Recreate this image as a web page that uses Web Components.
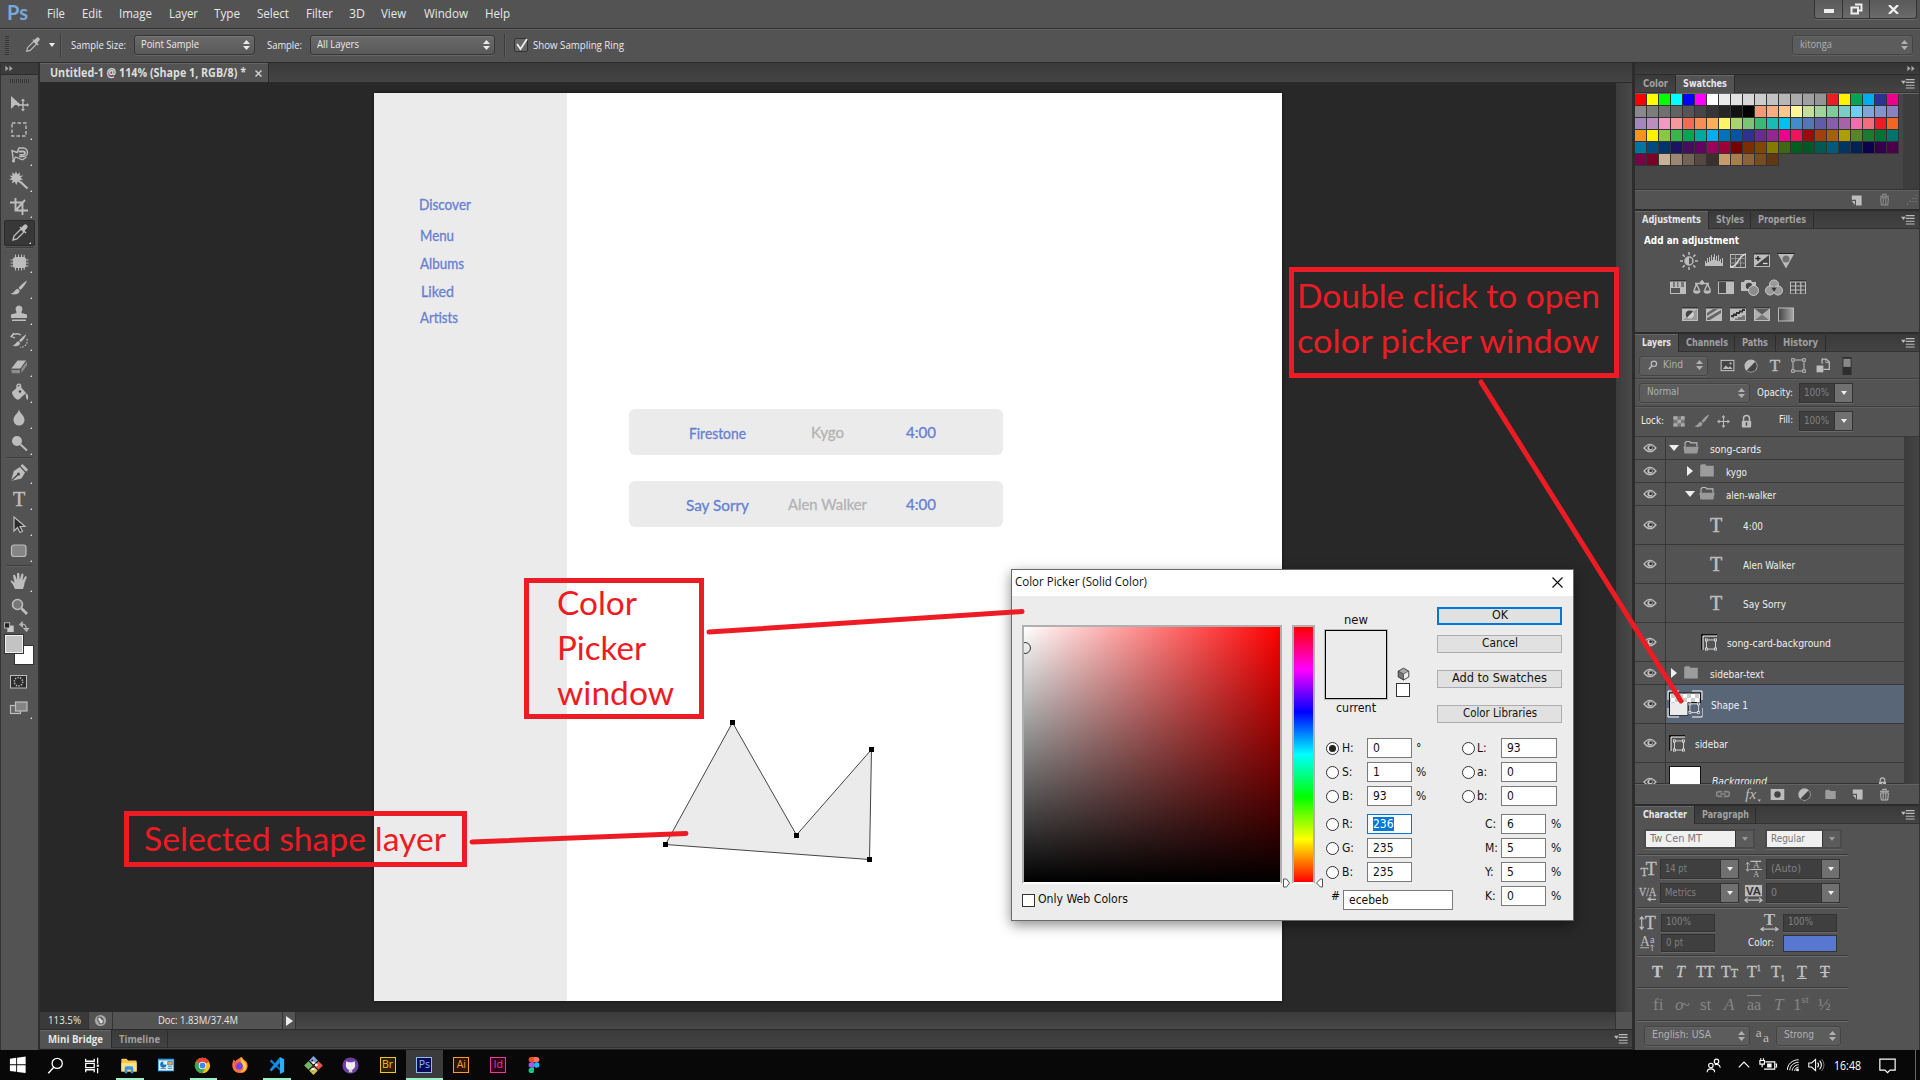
<!DOCTYPE html>
<html lang="en"><head><meta charset="utf-8"><title>Untitled-1 @ 114% (Shape 1, RGB/8) *</title>
<style>
html,body{margin:0;width:1920px;height:1080px;overflow:hidden;background:#282828}
body{font:11px "DejaVu Sans Condensed","DejaVu Sans",sans-serif;color:#e8e8e8}
</style></head><body>
<ps-app></ps-app>
<script>
const BASE='*{box-sizing:border-box}:host{display:block}.r{display:flex;align-items:center}.c{flex:none;display:flex;align-items:center}';
function def(name,css,html,after){
  customElements.define(name,class extends HTMLElement{
    connectedCallback(){
      if(this.shadowRoot)return;
      const s=this.attachShadow({mode:'open'});
      s.innerHTML='<style>'+BASE+css+'</style>'+(typeof html==='function'?html(this):html);
      if(after)after(this,s);
    }
  });
}
const A=(e,n,d='')=>e.getAttribute(n)??d;
/* A flex row: items are [x, width, markup], spaced from the starting x. */
function row(x0,h,items,extra=''){
  let x=x0,o=`<div class="r" style="height:${h}px;${extra}">`;
  for(const [px,w,m] of items){o+=`<div class="c" style="margin-left:${px-x}px;width:${w}px;height:100%">${m}</div>`;x=px+w}
  return o+'</div>';
}
const tx=(t,w,st='')=>`<t-x w="${w}" style="${st}">${t}</t-x>`;
const ic=(n,w=20,h=w,st='')=>`<ps-icon n="${n}" w="${w}" h="${h}" style="${st}"></ps-icon>`;
/* Text that is set to an exact advance width. */
def('t-x',':host{display:block;flex:none;white-space:nowrap;line-height:1.3}span{display:inline-block;transform-origin:0 50%}','<span><slot></slot></span>',(e,s)=>{
  const w=+A(e,'w',0),sp=s.querySelector('span');
  if(w){const n=sp.getBoundingClientRect().width;if(n){sp.style.transform=`scaleX(${w/n})`;e.style.width=w+'px'}}
});

const S='fill="none" stroke="currentColor"';
const letT=(x,y,s,t='T',o='')=>`<text x="${x}" y="${y}" font-family="Liberation Serif" font-size="${s}" text-anchor="middle" fill="currentColor" ${o}>${t}</text>`;
const sq=(b)=>`<rect x="2" y="3" width="16" height="13" fill="#bdbdbd"/><rect x="2" y="2.400" width="16" height="1" fill="#222"/>`+b;
const eyed=`<path d="M4 17l1-4 7-7 3 3-7 7z" ${S} stroke-width="1.3"/><path d="M10.5 4.500l6 6 1-1-1.800-1.800 2.200-2.400a2 2 0 0 0-3-3.200l-2.600 2.400-1-1z" fill="currentColor"/>`;
const brush=`<path d="M18 2.500c-3 1.500-6 4.500-8.500 7.500l2 2c3-3 5.500-6.200 6.500-9.500zM8.800 10.800c-3 .2-2.800 4.200-7.300 5 3.500 1.700 8.800.8 9.200-3z" fill="currentColor"/>`;
const bbox=`<path d="M5 3.500h10M5 16.500h10M3.500 5v10M16.500 5v10" ${S} stroke-width="1.2"/><g fill="#535353" stroke="currentColor" stroke-width="1.1"><rect x="2" y="2" width="3" height="3"/><rect x="15" y="2" width="3" height="3"/><rect x="2" y="15" width="3" height="3"/><rect x="15" y="15" width="3" height="3"/></g>`;
const half=`<circle cx="10" cy="10" r="6.500" ${S} stroke-width="1.500"/><path d="M14.600 5.400a6.500 6.500 0 0 1-9.200 9.200z" fill="#444"/><path d="M14.600 5.400a6.500 6.500 0 0 0-9.200 9.200z" fill="currentColor"/>`;
const lockI=`<path d="M6.500 9V6.500a3.500 3.500 0 0 1 7 0V9" ${S} stroke-width="1.800"/><rect x="4.500" y="9" width="11" height="8" rx="1" fill="currentColor"/><rect x="9.200" y="11" width="1.600" height="4" fill="#444"/>`;
const ICONS={
move:`<path d="M2 3v13l4-4h6z" fill="currentColor"/><path d="M14 7v10M9 12h10" ${S} stroke-width="1.300"/><path d="M14 5.500l2 2.500h-4zM14 18.500l2-2.500h-4zM7.800 12l2.200-2v4zM20 12l-2-2v4z" fill="currentColor"/>`,
marquee:`<rect x="3" y="4" width="14" height="13" ${S} stroke-width="1.400" stroke-dasharray="3.500 2"/>`,
lasso:`<path d="M4.500 16L3 5.500l5 2 2-4.500h4.500a4 4 0 1 1-.5 8.500H10" ${S} stroke-width="1.400"/><path d="M9.500 6.500h5c2 0 2 3 0 3.300h-4" ${S} stroke-width="1.800"/><path d="M4.500 16l2-4 7 2.800 4-2.500" ${S} stroke-width="1.200"/><circle cx="4.500" cy="16" r="1.500" fill="currentColor"/>`,
wand:`<path d="M7 0l1.200 3.300L11 1.500l-.5 3.300 3.700-.3-2.700 2.200 2.700 2-3.400.3 1 3.200-3-1.700L7.300 14l-1.500-3.300-3 1.600.9-3.300L.3 8.700l2.600-2L.4 4.500l3.300.2-.8-3.300 3 1.700z" fill="currentColor"/><path d="M11 10.500l7.500 7" ${S} stroke-width="2.200"/>`,
crop:`<path d="M6.500 1v12.500H19M1 5.500h12.500V18M6.500 13.500L16 3" ${S} stroke-width="1.900"/>`,
eyed:eyed,
heal:`<rect x="4" y="5" width="13" height="11" rx="2.500" fill="currentColor"/><path d="M6.500 2.500v16M9.500 2.500v16M12.500 2.500v16M15.200 3v15M1.500 8h18M1.500 11h18M1.500 14h18" ${S} stroke-width="1"/>`,
brush:brush,
stamp:`<path d="M7.500 9c.5-1.500-1.500-3-.8-5a3.400 3.400 0 0 1 6.600 0c.7 2-1.300 3.500-.8 5l5.500 1.500V14H2v-3.500zM3 15.500h14V17H3z" fill="currentColor"/>`,
history:`<g transform="translate(2 2) scale(.85)">${brush}</g><path d="M2 6.500C5 3 9 3.500 12 5M5 3L2 6.500l4 1.300" ${S} stroke-width="1.300"/><path d="M18 9c1 5-2 8-7 8.500" ${S} stroke-width="1.300" stroke-dasharray="1.500 1.500"/>`,
eraser:`<path d="M2 13l6.500-8.500h9L11.500 13z" fill="currentColor"/><path d="M2 13.800h9.500v3.500H3zM12.300 13l5.500-7.500.2 4-5.700 7.600z" fill="#8d8d8d"/><path d="M2 13h9.500l6-8.500M11.500 13v4.300" fill="none" stroke="#444" stroke-width=".8"/>`,
bucket:`<path d="M3 10l7.500-6.500L17 11l-7 6.500c-3 1-7-4-7-7.500z" fill="currentColor"/><path d="M8 9V3.500a2 2 0 0 1 3.500-.5v5" ${S} stroke-width="1.400"/><circle cx="11" cy="9.500" r="1.300" fill="#444"/><path d="M16.500 11c2.500 1 3.500 4 2 7-1.800-1-1.500-4-2-7z" fill="currentColor"/>`,
drop:`<path d="M10 1.500c1 4 5.500 6 5.500 10.500a5.500 5.500 0 0 1-11 0C4.500 7.500 9 5.500 10 1.500z" fill="currentColor"/>`,
dodge:`<circle cx="8" cy="7" r="5" fill="currentColor"/><path d="M11.500 10.500l6.500 6" ${S} stroke-width="2"/>`,
pen:`<path d="M2 18l2.800-10 6-4 5.200 5.500-3.500 6z" fill="currentColor"/><path d="M2.500 17.500l6.500-6" stroke="#444" stroke-width="1.200"/><circle cx="9.500" cy="11" r="1.500" fill="#444"/><path d="M11.500 2.800l2-1.800 5.500 5.500-1.800 2.200z" fill="currentColor"/>`,
T:letT(10,16.5,20,'T','stroke="currentColor" stroke-width=".5"'),
arrow:`<path d="M5 2v14l3.500-3.500 2.500 5 2.500-1.200-2.500-4.800h5z" fill="#2a2a2a" stroke="currentColor" stroke-width="1.200"/>`,
rrect:`<rect x="2.500" y="4" width="14.500" height="11.500" rx="2.500" fill="#858585" stroke="currentColor" stroke-width="1.200"/>`,
hand:`<path d="M5.500 17C4.500 14 2 11.500 1.500 9.800c1.200-1 2.700.5 4 2.200L4 4.500c.8-1.300 2-.8 2.500.5L8 9V2.500c.6-1.200 2-1 2.300 0l.4 6.200L12.500 3c.9-1 2-.6 2 .5l-1 6 2.500-4c1-.8 2 0 1.700 1L15.500 12c-.3 3-1 4-1.500 6H6z" fill="currentColor"/>`,
zoom:`<circle cx="8.500" cy="7.500" r="5" fill="#777" stroke="currentColor" stroke-width="1.600"/><path d="M12.500 11.500l5.500 5.500" ${S} stroke-width="2.800"/>`,
swap:`<rect x="5" y="7" width="8" height="8" fill="#c8c8c8"/><rect x="1.500" y="3.500" width="6.500" height="6.500" fill="#222" stroke="#ccc"/><path d="M22 5.500c4-1.500 6.500 1 7 6.500M23.500 2.500l-3 3.200 3.500 2.500zM26 10.500h5.500l-2.500 3.500z" ${S} stroke-width="1.300"/>`,
qmask:`<rect x="1.500" y="3.500" width="16" height="12.500" fill="#2d2d2d" stroke="currentColor"/><circle cx="9.500" cy="9.700" r="4.200" ${S} stroke-width="1.500" stroke-dasharray="1.300 1.300"/>`,
screens:`<rect x="1.500" y="7.500" width="10" height="8" fill="#666" stroke="currentColor" stroke-width="1.200"/><rect x="6.500" y="4" width="11.500" height="9" fill="#858585" stroke="currentColor" stroke-width="1.200"/>`,
sun:`<circle cx="10" cy="10" r="4" ${S} stroke-width="1.500"/><path d="M10 6a4 4 0 0 0 0 8z" fill="currentColor"/><path d="M10 1v3M10 16v3M1 10h3M16 10h3M3.600 3.600l2.200 2.200M14.200 14.200l2.200 2.200M3.600 16.400l2.200-2.200M14.200 5.800l2.200-2.200" ${S} stroke-width="1.500"/>`,
levels:`<path d="M1 15v-5h1v2h1V7h1v4h1V6h1v4h1V4h1v5h1V6h1V3h1v6h1V5h1v5h1V4h1v6h1V8h1v4h1V7h1v8z" fill="currentColor"/>`,
curves:`<rect x="2.500" y="3.500" width="15" height="13" fill="none" stroke="currentColor"/><path d="M7.500 3v13M12.500 3v13M2 7.500h16M2 12h16" stroke="#999" stroke-width=".9"/><path d="M2 16C11 16 9 5 18 3" fill="none" stroke="#ddd" stroke-width="1.500"/>`,
expo:sq(`<path d="M17 4v11H3z" fill="#444"/><path d="M3.500 7.500h5M6 5v5" stroke="#222" stroke-width="1.300"/><path d="M11 12.500h4.500" stroke="#ddd" stroke-width="1.300"/>`),
vib:`<path d="M2 3h16l-8 14.500z" fill="#bbb"/><path d="M1.500 2.500h17" stroke="#222"/><circle cx="10" cy="8" r="3.500" fill="#707070"/>`,
hue:sq(`<path d="M5 4h2v5H5zM9 4h1.500v5H9zM13 4h3v5h-3z" fill="#777"/><rect x="3" y="10" width="9" height="5" fill="#555"/>`),
bal:`<path d="M10 2v5M3 5.500h14M4.500 6L2 12.500M4.500 6L7.500 12.500M15.500 6L12.500 12.500M15.500 6l3 6.500M8 4h4" ${S} stroke-width="1.400"/><path d="M1 12.500h7.500a3.700 3.200 0 0 1-7.500 0zM11.500 12.500H19a3.700 3.200 0 0 1-7.500 0z" fill="currentColor"/>`,
bw:sq(`<rect x="3" y="4" width="7" height="11" fill="#4a4a4a"/>`),
photo:`<path d="M1 4h3l1-2h6l1 2h4v9H1z" fill="currentColor"/><circle cx="9" cy="8" r="3.200" fill="#444"/><circle cx="13.500" cy="12.500" r="5" fill="#8c8c8c" stroke="#ccc"/>`,
mixer:`<g fill="#999" stroke="#ccc"><circle cx="10" cy="6.500" r="4.500"/><circle cx="6" cy="12.500" r="4.500"/><circle cx="14" cy="12.500" r="4.500"/></g><path d="M7.500 9.500h5L10 14z" fill="#333"/>`,
lut:sq(`<path d="M3 4.500h4v3H3zM8.200 4.500h4v3h-4zM13.400 4.500H17v3h-3.600zM3 8.500h4v3H3zM8.200 8.500h4v3h-4zM13.400 8.500H17v3h-3.600zM3 12.500h4v3H3zM8.200 12.500h4v3h-4zM13.400 12.500H17v3h-3.600z" fill="#4b4b4b"/>`),
inv:sq(`<path d="M3 15L17 4v11z" fill="#9a9a9a"/><ellipse cx="10" cy="9.500" rx="4.200" ry="4" fill="#444"/><path d="M13 6.500a4 4 0 0 1-6 6z" fill="#ccc"/>`),
post:sq(`<path d="M3 11L14 4h-5L3 8zM3 15h3L17 8V5L3 13z" fill="#666"/>`),
thr:sq(`<path d="M3 12v-2h2V8.500h3V7h3V5.500h3V4h3v2h-2v1.500h-3V9H9v2H6v1.500z" fill="#333"/><path d="M7 15v-1.500h3V12h4v-1.500h3V15z" fill="#777"/>`),
sel:sq(`<path d="M3 4l7 5.500L3 15zM17 4l-7 5.500 7 5.500z" fill="#b0b0b0"/><path d="M3 4l7 5.500L17 4z" fill="#5b5b5b"/><path d="M3 15l7-5.500 7 5.500z" fill="#777"/>`),
gmap:`<linearGradient id="g"><stop stop-color="#444"/><stop offset="1" stop-color="#aaa"/></linearGradient><rect x="2.500" y="3" width="15" height="13" fill="url(#g)" stroke="#bbb"/>`,
img:`<rect x="2.500" y="4" width="15" height="12" fill="#444" stroke="currentColor" stroke-width="1.300"/><path d="M4.500 14l3.500-4 3 2.500 2-1.500 3 3z" fill="currentColor"/><circle cx="13.500" cy="7.500" r="1.200" fill="currentColor"/>`,
half, bbox,
smart:`<path d="M9.500 8V2.500h5L18 6v8.500h-7" ${S} stroke-width="1.500"/><path d="M14 2.500V6.500h4" ${S}/><rect x="3" y="10" width="8" height="8" fill="currentColor"/>`,
sw:`<rect x="5" y="0" width="10" height="20" fill="#2e2e2e"/><rect x="6" y="2" width="8" height="9" fill="#888"/>`,
search:`<circle cx="11.500" cy="8" r="4.500" ${S} stroke-width="2"/><path d="M8 11.500L3 17" ${S} stroke-width="2.400"/>`,
check:`<rect x="3" y="4" width="14" height="13" fill="#777"/><path d="M3 4h5v4.300H3zM12.500 4H17v4.300h-4.500zM8 8.300h4.500v4.400H8zM3 12.700h5V17H3zM12.500 12.700H17V17h-4.500z" fill="#aaa"/>`,
mv4:`<path d="M10 2v16M2 10h16" ${S} stroke-width="1.600"/><path d="M10 0l3 4H7zM10 20l3-4H7zM0 10l4-3v6zM20 10l-4-3v6z" fill="currentColor"/>`,
lock:lockI,
eye:`<path d="M1.500 10Q10-.5 18.500 10 10 20.500 1.500 10z" fill="#444" stroke="currentColor" stroke-width="1.800"/><circle cx="10" cy="10" r="3.800" fill="currentColor"/><circle cx="11" cy="9.500" r="2" fill="#2c2c2c"/>`,
fopen:`<path d="M3 16V4.500l1.500-1.500h4l1.200 1.500H17V9" ${S} stroke-width="1.300"/><path d="M1 9h18l-1.500 8h-15z" fill="#999"/>`,
folder:`<path d="M2 17V4l1.500-1.500H8L9.500 4.500H18V17z" fill="#9c9c9c"/>`,
link:`<path d="M9 7H5a3 3 0 0 0 0 6h4M11 7h4a3 3 0 0 1 0 6h-4M6.500 10h7" fill="none" stroke="#888" stroke-width="2"/>`,
fx:letT(8,15,18,'fx','font-style="italic"')+`<path d="M16 16h4l-2 2.500z" fill="currentColor"/>`,
mask:`<rect x="2" y="3.500" width="16" height="13" fill="currentColor"/><circle cx="10" cy="10" r="3.800" fill="#444"/>`,
newi:`<path d="M4 3.500h14V18h-8V9.500H4z" fill="currentColor"/><path d="M4 11.500h4.500V17z" fill="currentColor"/>`,
trash:`<path d="M7.500 4V2h5v2M3 5h14" ${S} stroke-width="1.600"/><path d="M4 7.500h12l-1 11H5z" fill="none" stroke="currentColor" stroke-width="1.500"/><path d="M8 8v10M12 8v10" ${S} stroke-width="1.400"/>`,
pmenu:`<path d="M0 6h6l-3 4z" fill="#bbb"/><path d="M6 4.500h11M6 8h11M6 11.500h11M6 15h11" stroke="#bbb" stroke-width="1.400"/>`,
dbl:`<path d="M2 4l7 6-7 6zM11 4l7 6-7 6z" fill="#aaa"/>`,
ft:letT(5.5,17,13,'T','stroke="currentColor" stroke-width=".3"')+letT(13,16,19,'T','stroke="currentColor" stroke-width=".4"'),
ld:`<path d="M3 3v9M1 5l2-2.500L5 5M1 10l2 2.500L5 10" ${S}/>`+letT(12.5,9,10,'A')+letT(12.5,19,9,'A')+`<path d="M6 1.500h12M6 10.500h13" ${S} stroke-width="1.200"/>`,
va:`<text x="0" y="13" font-family="Liberation Serif" font-size="15" fill="currentColor" stroke="currentColor" stroke-width=".3" textLength="19" lengthAdjust="spacingAndGlyphs">V/A</text><path d="M19 17h-8M13 15l-3 2 3 2" ${S} stroke-width="1.300"/>`,
va2:`<rect x="1" y="1" width="18" height="12" fill="#bbb"/><text x="2" y="12" font-family="Liberation Sans" font-weight="bold" font-size="12" fill="#333">VA</text><path d="M1 17h18M4 14.500L1 17l3 2.500M16 14.500l3 2.500-3 2.500" ${S} stroke-width="1.300"/>`,
vt:`<path d="M3 3v14M.8 6L3 3l2.200 3M.8 14L3 17l2.200-3" ${S} stroke-width="1.300"/>`+letT(12.5,17,20,'T','stroke="currentColor" stroke-width=".4"'),
ht:letT(10,13,18,'T','font-weight="bold"')+`<path d="M1 17h18M4 15l-3 2 3 2M16 15l3 2-3 2" ${S} stroke-width="1.300"/>`,
base:letT(7,13,16,'A')+`<path d="M1 15h11" ${S}/>`+letT(15.5,9,12,'a')+`<path d="M15.500 19v-7M13.500 13.500l2-2 2 2" ${S}/>`,
aa:letT(5,10,18,'a')+letT(14.5,17,18,'a'),
win:`<path d="M1 3l7-1v7.300H1zM9 1.900L18.500.6v8.700H9zM1 10.300h7v7.300l-7-1zM9 10.300h9.500V19L9 17.700z" fill="#fff"/>`,
wsearch:`<circle cx="12" cy="7.500" r="6" fill="none" stroke="#fff" stroke-width="1.500"/><path d="M8 12L1.500 19" stroke="#fff" stroke-width="1.700"/>`,
tview:`<path d="M2 2v3h10V2M2 18v-3h10v3M2 7.500h10v5H2zM16 1v7M16 13v6" fill="none" stroke="#fff" stroke-width="1.500"/><rect x="15" y="9" width="2.500" height="2.500" fill="#fff"/>`,
explorer:`<path d="M1 17V3q0-1 1-1h5l2 2h9q1 0 1 1v12z" fill="#f7c64c"/><path d="M1 7h18v10H1z" fill="#ffe08a"/><path d="M5 19v-6q0-2 2-2h6q2 0 2 2v6h-3v-4H8v4z" fill="#3a96dd"/>`,
mail:`<rect x="1" y="3" width="18" height="14" fill="#2f9be0"/><rect x="2" y="5" width="16" height="11" fill="#e8f4fb"/><path d="M7 6a3.500 3.500 0 1 0 3.500 3.500H7z" fill="#1976bd"/><path d="M12 6h5v4h-5zM4 14h6" fill="#f2a33c" stroke="#3487c8" stroke-width="1"/><path d="M12 12h5M12 14h5" stroke="#3487c8"/>`,
chrome:`<circle cx="10" cy="10" r="9" fill="#fbc116"/><path d="M10 10L2.200 5.500A9 9 0 0 1 17.800 5.500z" fill="#ea4335"/><path d="M10 10L2.200 5.500A9 9 0 0 0 10 19l4-7z" fill="#34a853"/><circle cx="10" cy="10" r="4.400" fill="#fff"/><circle cx="10" cy="10" r="3.400" fill="#4285f4"/>`,
firefox:`<path d="M10 2C13 0 12 2 14 4l3 2c4 6 0 13-7 13S-1 12 3 4l2 2c1-2 3-2 5-4z" fill="#ff7139"/><path d="M11 1c1 3 4 4 5.500 7 2 5-1 10-6.500 10 4-2 5-5 3-8-1-2-3-4-2-9z" fill="#ffd43b"/><circle cx="9" cy="11" r="4" fill="#7542e5"/><path d="M3 7c3-1 5 0 6 1-2 0-3 1-3 3z" fill="#ff4f5e"/>`,
vscode:`<path d="M14 0l5 2.500v15L14 20z" fill="#2bb0f5"/><path d="M14 4v12L2 5 4 3l10 10z" fill="#0d7fd0"/><path d="M14 0v7L4 17l-2-2z" fill="#168fe0"/>`,
git:`<g transform="rotate(45 10 10)"><rect x="3" y="3" width="6.500" height="6.500" fill="#82a7e8"/><rect x="10.500" y="3" width="6.500" height="6.500" fill="#e8554c"/><rect x="3" y="10.500" width="6.500" height="6.500" fill="#70b85d"/><rect x="10.500" y="10.500" width="6.500" height="6.500" fill="#d6c14a"/></g><path d="M8 4l5 5M9.500 7v9" stroke="#333" stroke-width="1.600"/><circle cx="10" cy="7" r="1.500" fill="#fff"/><circle cx="13" cy="9.500" r="1.500" fill="#fff"/><circle cx="9.500" cy="14" r="1.500" fill="#fff"/>`,
github:`<circle cx="10" cy="10" r="9.500" fill="#6e3fa3"/><path d="M5 5l3 1.200h4L15 5l.5 4.500c0 8-11 8-11 0z" fill="#eee"/><path d="M8 15h4v3H8z" fill="#ccc"/>`,
figma:`<path d="M10 1H7a3 3 0 0 0 0 6h3z" fill="#f24e1e"/><path d="M10 1h3a3 3 0 0 1 0 6h-3z" fill="#ff7262"/><path d="M10 7H7a3 3 0 0 0 0 6h3z" fill="#a259ff"/><circle cx="13" cy="10" r="3" fill="#1abcfe"/><path d="M10 13H7a3 3 0 1 0 3 3z" fill="#0acf83"/>`,
people:`<g fill="none" stroke="#fff" stroke-width="1.500"><circle cx="6.500" cy="10" r="3"/><path d="M1.500 19c0-6 10-6 10 0"/><circle cx="14" cy="4.500" r="3"/><path d="M11.500 9c4-1.500 7 .5 7.500 4"/></g>`,
chev:`<path d="M2.500 13.500L10 6l7.500 7.500" fill="none" stroke="#fff" stroke-width="1.700"/>`,
batt:`<path d="M7 6.500h10.500v8H5.500M18.500 9h1v3h-1" fill="none" stroke="#fff" stroke-width="1.300"/><rect x="9" y="8.300" width="5" height="4.500" fill="#fff"/><path d="M1 5h5v4H1zM2 2.500V5M5 2.500V5M3.500 9v3.500" fill="none" stroke="#fff" stroke-width="1.300"/>`,
wifi:`<g fill="none" stroke="#fff" stroke-width="1.400"><path d="M2 17C2 9 9 2.500 18 2.500M5.500 17.500c0-6 5-11 12.500-11.500M9 18c0-4 4-8 9-8.500M12.500 18.500c0-3 2.500-5 5.500-5.500"/></g><circle cx="16.500" cy="17" r="2" fill="#fff"/>`,
vol:`<path d="M1 7.500h3.500L9.500 3v14l-5-4.500H1z" fill="none" stroke="#fff" stroke-width="1.300"/><path d="M12 7q2.500 3 0 6M14.500 4.500q4.500 5.500 0 11" fill="none" stroke="#fff" stroke-width="1.300"/><path d="M17 2.500q6 7.500 0 15" fill="none" stroke="#777" stroke-width="1.200"/>`,
action:`<path d="M1 2.500h18v13h-6l-3 3-3-3H1z" fill="none" stroke="#fff" stroke-width="1.400"/>`,
cube:`<path d="M10 1l8 4.500v9L10 19l-8-4.500v-9z" fill="#aaa" stroke="#333" stroke-width="1.300"/><path d="M2 5.500L10 10v9l-8-4.500z" fill="#777" stroke="#333"/><path d="M10 10l8-4.500v9L10 19z" fill="#eee" stroke="#333"/>`,
doc:`<circle cx="10" cy="10" r="8.500" fill="#aaa"/><path d="M6 5h5l3 3v7H8v-4H6zM11 5v3h3" fill="#ddd" stroke="#444" stroke-width="1.300"/>`
};
def('ps-icon',':host{flex:none;color:#bdbdbd}svg{display:block;overflow:visible}',e=>{const n=A(e,'n'),w=A(e,'w',20),h=A(e,'h',20);
 return `<svg width="${w}" height="${h}" viewBox="0 0 ${n==='swap'?'38 20':'20 20'}">${ICONS[n]||''}</svg>`});

def('ps-select',':host{flex:none;width:100%;height:20px;border:1px solid #363636;border-radius:3px;background:linear-gradient(#6a6a6a,#595959);box-shadow:0 1px 0 #666,inset 0 1px 0 #777;padding:0 4px 0 6px}:host([dim]){background:#5c5c5c;box-shadow:0 1px #606060,inset 0 1px #666;border-color:#444;color:#b0b0b0;padding-left:7px}div{display:flex;height:17px;align-items:center;justify-content:space-between}',
 ()=>`<div><slot></slot><svg width="7" height="10" viewBox="0 0 7 10" style="flex:none"><path d="M0 4l3.500-4L7 4zM0 6l3.500 4L7 6z" fill="currentColor"/></svg></div>`);
def('ps-combo',':host{flex:none;width:100%;height:20px;border:1px solid #333;background:#3f3f3f;color:#808080;box-shadow:0 1px #686868}:host([lit]) .v{background:#f0f0f0;color:#777}:host([lit]) .b{background:#5b5b5b}:host([lit]){border:2px solid #4a4a4a}div.w{display:flex;height:100%}.v{flex:1;display:flex;align-items:center;padding-left:4px}.b{width:18px;background:#707070;border-left:1px solid #333;display:flex;align-items:center;justify-content:center}',
 e=>`<div class="w"><div class="v"><slot></slot></div>${e.hasAttribute('plain')?'':`<div class="b"><svg width="6" height="4"><path d="M0 0h6l-3 4z" fill="${e.hasAttribute('lit')?'#999':'#eee'}"/></svg></div>`}</div>`);

/* Tab strip. tabs = "label:tabWidth:textWidth|..." */
def('ps-tabs',':host{flex:none;height:18px;background:linear-gradient(#3a3a3a,#434343);border-bottom:1px solid #333;color:#a0a0a0;font-weight:bold}.r{height:18px;justify-content:flex-start}.t{height:17px;border-right:1px solid #2c2c2c;display:flex;align-items:center;justify-content:center}.t.on{background:#535353;height:18px;color:#e6e6e6;box-shadow:inset 0 1px #666}.f{flex:1}',
 e=>{const on=+A(e,'on',0);return '<div class="r">'+A(e,'tabs').split('|').map((t,i)=>{const [l,w,tw]=t.split(':');return `<div class="t ${i===on?'on':''}" style="width:${w}px">${tx(l,tw)}</div>`}).join('')+'<div class="f"></div>'+ic('pmenu',16,16,'margin-right:2px')+'</div>'});

def('ps-menubar',':host{flex:none;height:29px;border-bottom:1px solid #333;background:#535353;font:12.500px "Open Sans","Noto Sans",sans-serif}.wb{display:flex;width:103px;height:19px;border:1px solid #333;border-top:0;border-radius:0 0 3px 3px;background:linear-gradient(#5a5a5a,#6a6a6a);box-shadow:0 1px #6a6a6a}.wb div{border-right:1px solid #333;display:flex;align-items:center;justify-content:center}.wb div:last-child{border:0}',
 ()=>row(0,28,[[7,22,tx('Ps',21,'font:bold 21px Lato;line-height:24px;color:#79a7dc;padding-bottom:4px')],[47,19,tx('File',18)],[82,21,tx('Edit',20)],[119,34,tx('Image',33)],[169,30,tx('Layer',29)],[214,27,tx('Type',26)],[257,33,tx('Select',32)],[306,28,tx('Filter',27)],[349,18,tx('3D',16)],[381,27,tx('View',25)],[424,45,tx('Window',44)],[485,27,tx('Help',25)],
 [1814,104,`<div class="wb" style="align-self:flex-start"><div style="width:28px;padding-top:4px"><svg width="10" height="4"><path d="M0 0h10v4H0z" fill="#eee"/></svg></div><div style="width:27px"><svg width="13" height="12"><path d="M5 1.500h6.500v6H9M1.500 4.500H8v6H1.500z" fill="none" stroke="#eee" stroke-width="2"/></svg></div><div style="flex:1"><svg width="11" height="9"><path d="M1 0l9 9M10 0L1 9" stroke="#eee" stroke-width="2.300"/></svg></div></div>`]]));

def('ps-options',':host{flex:none;height:34px;background:#535353;border-top:1px solid #636363;border-bottom:1px solid #2c2c2c;font:11px "Open Sans","Noto Sans",sans-serif;color:#eaeaea}.g{width:4px;height:19px;background:repeating-linear-gradient(#333 0 1px,#5a5a5a 1px 2px)}.v{width:2px;height:23px;border-left:1px solid #3c3c3c;border-right:1px solid #5e5e5e}.cb{width:14px;height:14px;border:1px solid #333;background:#666;border-radius:2px}.cb svg{display:block;overflow:visible}',
 ()=>row(0,30,[[5,4,'<div class="g"></div>'],[23,18,ic('eyed',18)],[49,6,'<svg width="6" height="4"><path d="M0 0h6l-3 4z" fill="#eee"/></svg>'],[60,2,'<div class="v"></div>'],[71,56,tx('Sample Size:',55)],[134,121,`<ps-select>${tx('Point Sample',58)}</ps-select>`],[267,36,tx('Sample:',35)],[310,185,`<ps-select>${tx('All Layers',42)}</ps-select>`],[504,2,'<div class="v"></div>'],[514,15,'<div class="cb"><svg width="12" height="12"><path d="M2 5l3.500 5L12 0" fill="none" stroke="#eee" stroke-width="1.800"/></svg></div>'],[533,92,tx('Show Sampling Ring',91)],[1792,121,`<ps-select dim>${tx('kitonga',32)}</ps-select>`]]));

def('ps-toolbar',':host{flex:none;width:40px;background:#535353;border-left:1px solid #333;border-right:2px solid #2e2e2e}.h{height:12px;background:#3c3c3c;border-bottom:1px solid #2c2c2c;padding:1px 3px}.g{margin:4px 0 7px 9px;width:19px;height:4px;background:repeating-linear-gradient(90deg,#333 0 1px,#5a5a5a 1px 2px)}.t{height:26px;width:37px;padding:3px 0 0 8px;position:relative}.t.m:after{content:"";position:absolute;right:6px;bottom:2px;border:1.500px solid transparent;border-right-color:#ddd;border-bottom-color:#ddd}.t.on{background:#383838;border:1px solid #2b2b2b;border-radius:2px;width:31px;margin-left:3px;padding:2px 0 0 4px;}.t.on:after{right:3px!important;bottom:1px!important}.s{margin:0 5px;background:#3d3d3d;border-bottom:1px solid #5c5c5c;height:2px}.cs{position:relative;height:34px}.cs div{position:absolute;width:20px;height:20px;border:1px solid #333;background:#fff}',
 ()=>{const L='move,marquee,lasso,wand,crop,eyed,-,heal,brush,stamp,history,eraser,bucket,drop,dodge,=,pen,T,arrow,rrect,-,hand,zoom'.split(',');
 return `<div class="h">${ic('dbl',10,9)}</div><div class="g"></div>`+L.map((n,i)=>n==='-'?`<div class="s" style="margin-top:1px;margin-bottom:${i<10?0:1}px"></div>`:n==='='?'<div class="s" style="margin-bottom:1px"></div>':`<div class="t ${/move|zoom/.test(n)?'':'m'} ${n==='eyed'?'on':''}">${ic(n,20)}</div>`).join('')
 +`<div style="height:15px;padding-left:2px">${ic('swap',31,16)}</div><div class="cs"><div style="left:13px;top:10px"></div><div style="left:4px;top:0;background:#c3c3c3;border:1px solid #eee;outline:1px solid #333;width:18px;height:18px"></div></div><div class="t">${ic('qmask',20)}</div><div class="t m">${ic('screens',20)}</div>`});

def('art-text',':host{position:absolute;font:14.500px/20px Lato,sans-serif;-webkit-text-stroke:.3px currentColor;color:#6580d2}',e=>tx(e.textContent,A(e,'w'),'line-height:20px'),e=>{e.style.left=A(e,'x')+'px';e.style.top=(+A(e,'y')-14.6)+'px'});
/* White document with its side bar, song cards and the selected path. */
def('ps-artboard',':host{position:absolute;left:334px;top:10px;width:908px;height:908px;background:#fff;overflow:hidden;box-shadow:0 0 3px #111}.sb{width:193px;height:908px;background:#ebebeb}.card{position:absolute;left:255px;width:374px;height:46px;border-radius:6px;background:#ebebeb}svg{position:absolute;left:0;top:0}',
 ()=>{const a=(t,x,y,w,g='')=>`<art-text x="${x-374}" y="${y-93}" w="${w}" style="${g}">${t}</art-text>`,g='color:#b3b3b3';
 const P=[[732,722],[796,834.5],[871,749],[869,859],[665,844]].map(p=>[p[0]-373.5,p[1]-92.5]);
 return `<div class="sb"></div><div class="card" style="top:316px"></div><div class="card" style="top:388px"></div>`
 +a('Discover',419,210,52)+a('Menu',420,240.5,34)+a('Albums',420,269,44)+a('Liked',421,297,33)+a('Artists',420,322.500,38)
 +a('Firestone',689,439,57)+a('Kygo',811,438,33,g)+a('4:00',906,438,30)+a('Say Sorry',686,511,63)+a('Alen Walker',788,509.500,79,g)+a('4:00',906,509.500,30)
 +`<svg width="908" height="908"><polygon points="${P.map(p=>p.join()).join(' ')}" fill="#ebebeb" stroke="#444" stroke-width="1"/>${P.map(p=>`<rect x="${Math.floor(p[0]-2.5)}" y="${Math.round(p[1]-2.5)}" width="5" height="5" fill="#000"/>`).join('')}</svg>`});

def('ps-document',':host{flex:1;display:flex;flex-direction:column;width:1592px;background:#282828;position:relative}.tabs{height:20px;background:linear-gradient(#3a3a3a,#444);border-bottom:1px solid #2a2a2a;display:flex}.tab{width:229px;background:#535353;height:19px;border-right:1px solid #2b2b2b;box-shadow:inset 0 1px #666;display:flex;align-items:center;padding:2px 0 0 10px;color:#ddd;font:bold 11.500px "Open Sans",sans-serif}.m{display:flex;height:929px}.cv{width:1576px;position:relative;overflow:hidden;background:#282828}.vs{width:16px;background:linear-gradient(90deg,#3c3c3c,#484848)}.st{height:17px;display:flex}.st>div{display:flex;align-items:center;justify-content:center;background:#535353;border-right:1px solid #333;font:11px "Open Sans",sans-serif}',
 ()=>`<div class="tabs"><div class="tab">${tx('Untitled-1 @ 114% (Shape 1, RGB/8) *',196)}<svg width="7" height="7" style="margin-left:9px"><path d="M.5.5l6 6M6.500.5l-6 6" stroke="#ccc" stroke-width="1.500"/></svg></div></div>
 <div class="m"><div class="cv"><ps-artboard></ps-artboard></div><div class="vs"></div></div>
 <div class="st"><div style="width:49px;background:#3a3a3a">${tx('113.5%',33)}</div><div style="width:24px">${ic('doc',13)}</div><div style="width:170px">${tx('Doc: 1.83M/37.4M',80)}</div><div style="width:13px"><svg width="7" height="10"><path d="M0 0l7 5-7 5z" fill="#eee"/></svg></div><div style="flex:1;background:linear-gradient(#3a3a3a,#484848)"></div><div style="width:16px;border:0"></div></div>
 <div style="height:1px;background:#2a2a2a"></div><ps-tabs tabs="Mini Bridge:72:55|Timeline:56:41" style="font-family:'Open Sans'"></ps-tabs><div style="height:2px;background:#4a4a4a;border-bottom:1px solid #222"></div>`);

const SW=`ff0000 ffff00 00ff00 00ffff 0000ff ff00ff ffffff ebebeb e1e1e1 d7d7d7 cccccc c2c2c2 b7b7b7 acacac a0a0a0 959595 ed1c24 fff200 00a651 00aeef 2e3192 ec008c 898989 7d7d7d 707070 626262 555555 464646 363636 262626 111111 000000 f7977a f9ad81 fdc68a fff79a c4df9b a2d39c 82ca9d 7bcdc8 6ecff6 7ea7d8 8493ca 8882be a187be bc8dbf f49ac2 f6989d f26c4f f68e55 fbaf5c fff467 acd372 7cc576 3bb878 1abbb4 00bff3 438cca 5574b9 605ca8 855fa8 a763a8 f06ea9 f26d7d ed1c24 f26522 f7941d fff200 8dc73f 39b54a 00a651 00a99d 00aeef 0072bc 0054a6 2e3192 662d91 92278f ec008c ed145b 9e0b0f a0410d a36209 aba000 598527 1a7b30 007236 00746b 0076a3 004b80 003471 1b1464 440e62 630460 9e005d 9e0039 790000 7b2e00 7d4900 827b00 406618 005e20 005826 005952 005b7f 003663 002157 0d004c 32004b 4b0049 7b0046 7a0026 c7b299 998675 736357 534741 37302d c69c6d a67c52 8c6239 754c24 603913`.split(' ');
def('swatch-panel',':host{height:134px}.b{height:96px;background:#464646;display:flex;border-top:1px solid #666}.g{display:grid;grid-template-columns:repeat(22,12px);grid-auto-rows:12px;width:269px;align-content:start}.g i{background:var(--c);border-right:1px solid #333;border-bottom:1px solid #333}.sc{width:16px;background:#3d3d3d}.f{height:20px;border-top:1px solid #333;box-shadow:inset 0 1px #636363}',
 ()=>`<ps-tabs on="1" tabs="Color:41:25|Swatches:59:44"></ps-tabs><div class="b"><div class="g">${SW.map(c=>`<i style="--c:#${c}"></i>`).join('')}</div><div class="sc"></div></div><div class="f">${row(1635,19,[[1849,14,ic('newi',14)],[1878,14,ic('trash',13,13,'opacity:.6')],[1907,12,'<svg width="11" height="11"><g fill="none" stroke="#888" stroke-dasharray="1 2"><path d="M9 1v9M6 4v6M3 7v3M0 10h1"/></g></svg>']])}</div>`);

def('adjust-panel',':host{height:121px}.b{padding-top:6px;height:103px;box-sizing:border-box}',
 ()=>{const r=(ns,xs,h)=>row(1635,h,xs.map((x,i)=>[x-10,20,ic(ns[i],20)]));
 return `<ps-tabs tabs="Adjustments:74:59|Styles:42:28|Properties:63:48"></ps-tabs><div class="b"><div style="padding-left:9px;font-weight:bold;color:#fff;height:12px">${tx('Add an adjustment',95,'line-height:12px')}</div>`
 +r(['sun','levels','curves','expo','vib'],[1689,1714,1738,1762,1786],27)+r(['hue','bal','bw','photo','mixer','lut'],[1678,1702,1726,1750,1774,1798],27)+r(['inv','post','thr','sel','gmap'],[1690,1714,1738,1762,1786],27)+'</div>'});

def('layer-row',':host{display:flex;border-bottom:1px solid #383838;color:#eee;flex:none}.e{width:31px;border-right:1px solid #383838;display:flex;align-items:center;justify-content:center}.m{flex:1}:host([sel]) .m{background:#596678}',
 e=>{const k=A(e,'k'),x=+A(e,'x'),h=+A(e,'h')-1;let it=[];
 const tri=d=>`<svg width="10" height="10"><path d="${d?'M0 2h10L5 8z':'M2 0l6 5-6 5z'}" fill="#eee"/></svg>`;
 if(k==='open')it=[[x-27.5,10,tri(1)],[x-14.5,18,ic('fopen',18,17,'margin-top:-1px')]];
 if(k==='closed')it=[[x-24,10,tri(0)],[x-11,18,ic('folder',18,17,'margin-top:-1px')]];
 if(k==='text')it=[[x,18,ic('T',20,20,'margin-left:-1px')]];
 const thumb='<svg width="17" height="17"><path d="M1 16V1h15" fill="none" stroke="#111" stroke-width="2"/><path d="M2 16V2H16" fill="none" stroke="#fff"/><g transform="translate(3 3.500) scale(.7)">'+bbox+'</g></svg>';
 if(k==='shape')it=[[x,17,thumb]];
 if(k==='sel')it=[[x,36,`<svg width="36" height="28"><defs><pattern id="k" width="8" height="8" patternUnits="userSpaceOnUse"><rect width="8" height="8" fill="#fff"/><path d="M0 0h4v4H0zM4 4h4v4H4z" fill="#ccc"/></pattern></defs><path d="M12 1H1v9M25 1h10v9M1 18v9h11M25 27h10v-9" fill="none" stroke="#fff"/><rect x="2.500" y="3" width="31" height="22" fill="url(#k)" stroke="#111"/><path d="M6 25l4-12h11v12z" fill="#ebebeb"/><path d="M3 13h7v12H3z" fill="#ebebeb"/><path d="M21 12h14v14H21z" fill="#596678"/><path d="M21 25V12.500h13" stroke="#111" fill="none"/><g transform="translate(20.500 11.500) scale(.67)">${bbox}</g></svg>`]];
 if(k==='bg')it=[[x,32,'<svg width="32" height="32"><rect x=".5" y=".5" width="31" height="31" fill="#fff" stroke="#111"/></svg>']];
 const tX=+A(e,'tx'),tw=+A(e,'tw');it.push([tX,tw,tx(e.textContent,tw,k==='bg'?'font-style:italic;padding-top:1px':'padding-top:4px')]);
 if(k==='bg')it.push([1876,12,ic('lock',13)]);
 return `<div class="e">${ic('eye',14,14)}</div><div class="m">${row(1666,h,it)}</div>`},e=>{e.style.height=A(e,'h')+'px'});

def('layers-panel',':host{height:470px}.list{height:348px;display:flex;border-top:1px solid #3a3a3a;overflow:hidden}.rows{width:269px;height:347px;overflow:hidden}.sc{flex:1;background:linear-gradient(90deg,#3b3b3b,#444)}',
 ()=>{const L=(k,h,x,tX,tw,t,s='')=>`<layer-row k="${k}" h="${h}" x="${x}" tx="${tX}" tw="${tw}" ${s}>${t}</layer-row>`;
 return `<ps-tabs tabs="Layers:44:29|Channels:56:42|Paths:41:26|History:50:35"></ps-tabs>`
 +row(1635,27,[[1639,69,`<ps-select dim><span style="display:flex;align-items:center;gap:4px">${ic('search',12)}${tx('Kind',20)}</span></ps-select>`],[1719,16,ic('img',17)],[1742,18,ic('half',18)],[1766,18,ic('T',18,17)],[1790,17,ic('bbox',17)],[1814,17,ic('smart',17)],[1838,20,ic('sw',18)]])
 +row(1635,28,[[1639,111,`<ps-select dim>${tx('Normal',32)}</ps-select>`],[1757,37,tx('Opacity:',36,'color:#eee')],[1799,54,`<ps-combo>${tx('100%',25)}</ps-combo>`]],'box-shadow:0 -1px #3d3d3d,inset 0 1px #5f5f5f')
 +row(1635,29,[[1641,24,tx('Lock:',23,'color:#eee')],[1671,16,ic('check',16)],[1693,18,ic('brush',18,18,'opacity:.7')],[1717,14,ic('mv4',13)],[1738,16,ic('lock',17)],[1779,15,tx('Fill:',14,'color:#eee;padding-bottom:2px')],[1799,54,`<ps-combo>${tx('100%',25)}</ps-combo>`]],'padding-bottom:1px;box-shadow:0 -1px #3d3d3d,inset 0 1px #5f5f5f')
 +`<div class="list"><div class="rows">`
 +L('open',23,1696,1710,51,'song-cards')+L('closed',23,1709,1726,21,'kygo')+L('open',23,1712,1726,50,'alen-walker')
 +L('text',39,1707,1743,20,'4:00')+L('text',39,1707,1743,52,'Alen Walker')+L('text',39,1707,1743,43,'Say Sorry')
 +L('shape',39,1701,1727,104,'song-card-background')+L('closed',23,1693,1710,54,'sidebar-text')+L('sel',39,1667,1711,37,'Shape 1','sel')
 +L('shape',39,1669,1695,33,'sidebar')+L('bg',39,1669,1712,55,'Background')
 +`</div><div class="sc"></div></div>`
 +row(1635,20,[[1715,16,ic('link',16,16)],[1744,18,ic('fx',17)],[1769,17,ic('mask',17)],[1796,18,ic('half',17)],[1823,16,ic('folder',15,13)],[1850,14,ic('newi',14)],[1878,14,ic('trash',13)]],'box-shadow:0 -1px #333,inset 0 1px #626262')});

def('char-panel',':host{flex:1}.hr{width:211px;margin-left:2px;height:2px;border-top:1px solid #3a3a3a;border-bottom:1px solid #6b6b6b}.col{width:54px;height:17px;border:1px solid #333;background:#5877d0}',
 ()=>{const hr='<div class="hr"></div>',C=(t,w,o='')=>`<ps-combo ${o}>${tx(t,w)}</ps-combo>`;
 const g=(t,st='')=>`<span style="font:16px/18px 'Liberation Serif';color:#c4c4c4;-webkit-text-stroke:.3px;white-space:nowrap;${st}">${t}</span>`;
 const q=(t,st='')=>g(t,'color:#858585;font-size:17px;-webkit-text-stroke:0;'+st);
 const xs=[1648,1672,1696,1721,1747,1771,1793,1820];
 return `<ps-tabs tabs="Character:60:44|Paragraph:61:47"></ps-tabs>`
 +row(1635,30,[[1644,111,C('Tw Cen MT',52,'lit')],[1765,77,C('Regular',34,'lit')]])+hr
 +row(1635,26,[[1639,19,ic('ft',19)],[1660,79,C('14 pt',22)],[1745,18,ic('ld',18)],[1766,74,C('(Auto)',30)]])
 +row(1635,25,[[1639,19,ic('va',18)],[1660,79,C('Metrics',31)],[1744,20,ic('va2',19)],[1766,74,C('0',6)]],'padding-bottom:3px')+hr
 +row(1635,25,[[1639,19,ic('vt',18)],[1661,54,C('100%',25,'plain style="height:18px"')],[1760,20,ic('ht',19)],[1783,54,C('100%',25,'plain style="height:18px"')]],'padding-top:2px')
 +row(1635,21,[[1639,19,ic('base',17)],[1661,54,C('0 pt',17,'plain style="height:18px"')],[1748,27,tx('Color:',26,'color:#eee')],[1783,54,'<div class="col"></div>']],'padding-bottom:3px')+hr
 +row(1635,30,[g('<b>T</b>','margin-left:4px'),g('<i>T</i>','margin-left:4px'),g('TT','letter-spacing:-1px'),g('T<small style="font-size:12px">T</small>'),g('T<sup style="font-size:8px;line-height:0">1</sup>'),g('T<sub style="font-size:8px;line-height:0">1</sub>'),g('<u>T</u>','margin-left:4px'),g('<s>T</s>')].map((m,i)=>[xs[i],22,m]))+hr
 +row(1635,31,[q('fi','margin-left:5px'),q('<i>o~</i>','margin-left:3px;letter-spacing:-3px'),q('st','margin-left:4px'),q('<i>A</i>','margin-left:3px'),q('aa','text-decoration:overline;font-size:16px'),q('<i>T</i>','margin-left:3px'),q('1<sup style="font-size:11px;line-height:0">st</sup>'),q('½','margin-left:-2px')].map((m,i)=>[xs[i],20,m]))+hr
 +row(1635,28,[[1644,106,`<ps-select dim>${tx('English: USA',59)}</ps-select>`],[1755,15,ic('aa',15)],[1776,65,`<ps-select dim>${tx('Strong',30)}</ps-select>`]])});

def('ps-panels',':host{flex:none;width:288px;background:#535353;border-left:3px solid #2c2c2c;border-right:1px solid #333;display:flex;flex-direction:column}.h{flex:none;height:12px;background:linear-gradient(#333,#3d3d3d);border-bottom:1px solid #2b2b2b;padding:1px 3px 0 0;display:flex;justify-content:flex-end}.gap{flex:none;height:2px;background:#2c2c2c}',
 ()=>`<div class="h">${ic('dbl',10,9)}</div><swatch-panel></swatch-panel><div class="gap"></div><adjust-panel></adjust-panel><div class="gap"></div><layers-panel></layers-panel><div class="gap"></div><char-panel></char-panel>`);

def('win-radio',':host{flex:none;width:13px;height:13px;border:1px solid #333;border-radius:50%;background:#fff;padding:2px}:host([on])::before{content:"";display:block;width:7px;height:7px;border-radius:50%;background:#222}','');
def('win-field',':host{flex:none;width:100%;height:20px;border:1px solid #7a7a7a;background:#fff;padding:2px 0 0 5px}:host([on]){border-color:#0078d7}:host([on]) slot{background:#0078d7;color:#fff;display:inline-block}',"<slot></slot>");
def('win-button',':host{flex:none;width:125px;height:18px;background:#e1e1e1;border:1px solid #adadad;display:flex;align-items:center;justify-content:center}:host([on]){border:2px solid #0078d7}',e=>tx(e.textContent,A(e,'w')));
def('color-picker',':host{position:absolute;left:1011px;top:569px;width:563px;height:352px;border:1px solid #6a6a6a;background:#ececec;color:#111;font-size:12px;box-shadow:0 4px 12px rgba(0,0,0,.45)}.tt{height:26px;background:#fff;display:flex;align-items:center;justify-content:space-between;padding:0 10px 2px 3px;font:12px "Open Sans",sans-serif}.b{display:flex;height:324px}.c1{width:270px;padding:29px 0 0 10px;flex:none}.sv{width:260px;height:259px;border:2px solid #b0b0b0;border-bottom-color:#fff;background:linear-gradient(to top,#000,transparent),linear-gradient(to right,#fff,red);position:relative;overflow:hidden}.sv i{position:absolute;left:-5px;top:15px;width:12px;height:12px;border:1px solid #333;border-radius:50%}.c2{width:44px;padding:29px 0 0 10px;flex:none;position:relative}.hue{width:23px;height:259px;border:2px solid #b0b0b0;border-bottom-color:#fff;background:linear-gradient(red,#f0f,#00f,#0ff,#0f0,#ff0,red)}.c2 svg{position:absolute;left:0;top:282px}.c3{flex:1}.top{display:flex;height:142px}.nw{width:62px;margin-left:-1px;display:flex;flex-direction:column;align-items:center;padding-top:17px}.sq{width:62px;height:69px;border:1px solid #000;outline:1px solid #bbb;outline-offset:0;background:#ebebeb;margin:1px 0 2px;flex:none}.sm{width:14px;height:14px;border:1px solid #333;background:#fff;flex:none}.cube{margin:71px 0 0 8px;width:16px;display:flex;flex-direction:column;align-items:center;gap:2px}.bt{margin-left:26px;padding-top:11px}',
 ()=>{const F=(v,o='')=>`<win-field ${o}>${v}</win-field>`;
 const rl=(l,v,u,o='',f='')=>[[1326,14,`<win-radio ${o}></win-radio>`],[1342,14,l],[1367,45,F(v,f)],[1416,14,u]];
 const rr=(l,v)=>[[1462,14,'<win-radio></win-radio>'],[1477,14,l],[1501,56,F(v)]];
 const cm=(l,v)=>[[1485,14,l],[1501,45,F(v)],[1551,12,'%']];
 return `<div class="tt">${tx('Color Picker (Solid Color)',132)}<svg width="11" height="11"><path d="M.5.5l10 10M10.500.5l-10 10" stroke="#111" stroke-width="1.200"/></svg></div>
 <div class="b"><div class="c1"><div class="sv"><i></i></div><div class="r" style="height:20px;margin-top:6px;gap:3px"><div class="sm" style="width:13px;height:13px"></div>${tx('Only Web Colors',90)}</div></div>
 <div class="c2"><div class="hue"></div><svg width="44" height="10" style="overflow:visible"><path d="M1.500 1h3l3 4-3 4h-3zM40.500 1h-2l-4 4 4 4h2z" fill="#fff" stroke="#555"/></svg></div>
 <div class="c3"><div class="top"><div class="nw">${tx('new',24)}<div class="sq"></div>${tx('current',40)}</div><div class="cube">${ic('cube',13,14)}<div class="sm"></div></div>
 <div class="bt"><win-button on w="16">OK</win-button><win-button w="36" style="margin-top:10px">Cancel</win-button><win-button w="95" style="margin-top:17px">Add to Swatches</win-button><win-button w="74" style="margin-top:17px">Color Libraries</win-button></div></div>`
 +row(1326,20,[...rl('H:','0','°','on'),...rr('L:','93')])+row(1326,20,[...rl('S:','1','%'),...rr('a:','0')],'margin-top:4px')+row(1326,20,[...rl('B:','93','%'),...rr('b:','0')],'margin-top:4px')
 +row(1326,20,[...rl('R:','236','','','on'),...cm('C:','6')],'margin-top:8px')+row(1326,20,[...rl('G:','235',''),...cm('M:','5')],'margin-top:4px')+row(1326,20,[...rl('B:','235',''),...cm('Y:','5')],'margin-top:4px')
 +row(1326,20,[[1331,9,'#'],[1343,110,F('ecebeb','style="margin-top:8px"')],...cm('K:','0')],'margin-top:4px')
 +`</div></div>`});

def('note-box',':host{position:absolute;border:5px solid #ed1c24;color:#ed1c24;font:32.500px/45px Lato,sans-serif}div{display:flex;flex-direction:column}',e=>'<div>'+e.textContent.split('|').map(l=>{const [t,w]=l.split('@');return tx(t,w,'line-height:45px')}).join('')+'</div>');

def('win-taskbar',':host{flex:none;height:30px;background:#080808;display:flex;color:#fff}.k{flex:none;width:36.920px;height:30px;display:flex;align-items:center;justify-content:center;position:relative}.k.u:after{content:"";position:absolute;left:5px;right:4px;bottom:0;height:2px;background:#9ff0c8}.k.a{background:#3b3b3b}.k.a:after{left:0;right:0}.ad{width:16px;height:16px;border:1px solid;font:10.500px/13px "Open Sans",sans-serif;text-align:center}.sp{flex:1}.tr{width:220px}',
 ()=>{const ad=(t,c,b)=>`<div class="ad" style="color:${c};background:${b}">${t}</div>`;
 const K=[ic('win',18),ic('wsearch',17),ic('tview',17),ic('explorer',18,17),ic('mail',18),ic('chrome',17),ic('firefox',18),ic('vscode',17),ic('git',19),ic('github',17),ad('Br','#f5c518','#2b2000'),ad('Ps','#8bbcff','#0a0a5a'),ad('Ai','#ff9d2e','#2b1500'),ad('Id','#ee3a96','#320016'),ic('figma',18,18,'margin-right:2px')];
 return K.map((m,i)=>`<div class="k ${[3,5,7,11].includes(i)?'u':''} ${i===11?'a':''}">${m}</div>`).join('')+'<div class="sp"></div><div class="tr">'+row(1700,30,[[1706,17,ic('people',15)],[1737,14,ic('chev',14)],[1759,18,ic('batt',18)],[1786,14,ic('wifi',14)],[1808,18,ic('vol',16)],[1834,28,tx('16:48',27,'font:12px Open Sans')],[1879,17,ic('action',17)],[1915,1,'<div style="width:1px;height:30px;background:#666"></div>']])+'</div>'});

def('ps-app',':host{width:1920px;height:1080px;display:flex;flex-direction:column;position:relative;overflow:hidden}.main{display:flex;height:987px;flex:none}.lines{position:absolute;left:0;top:0;z-index:3;pointer-events:none}',
 ()=>`<ps-menubar></ps-menubar><ps-options></ps-options><div class="main"><ps-toolbar></ps-toolbar><ps-document></ps-document><ps-panels></ps-panels></div><win-taskbar></win-taskbar>
 <color-picker></color-picker>
 <note-box style="left:524px;top:578px;width:180px;height:141px;padding-left:28px"><!-- -->Color@80|Picker@89|window@117</note-box>
 <note-box style="left:124px;top:811px;width:343px;height:56px;padding-left:15px">Selected shape layer@302</note-box>
 <note-box style="left:1289px;top:267px;width:330px;height:111px;padding:1px 0 0 3px">Double click to open@303|color picker window@302</note-box>
 <svg class="lines" width="1920" height="1080"><path d="M709 632L1022 611.500M472 842L686 833.500M1481 382L1681 701" stroke="#ed1c24" stroke-width="5" stroke-linecap="round" fill="none"/></svg>`,
 (e,s)=>{s.querySelector('note-box').shadowRoot.querySelector('div').style.marginTop='-3px'});
</script></body></html>
